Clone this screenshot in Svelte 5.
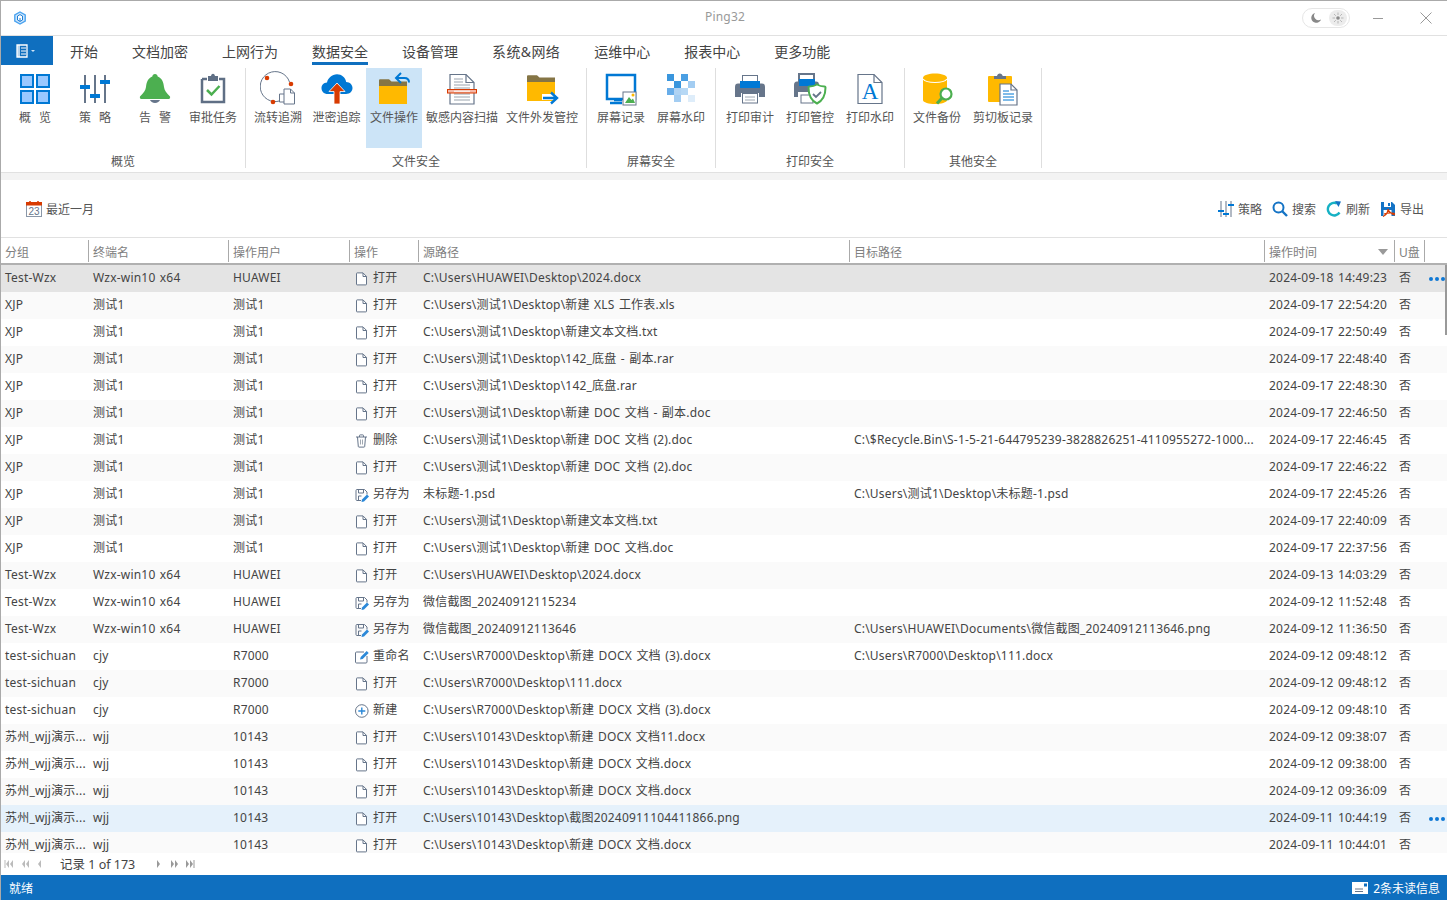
<script>
  const tabs = ['开始', '文档加密', '上网行为', '数据安全', '设备管理', '系统&网络', '运维中心', '报表中心', '更多功能'];

  const groups = [
    { label: '概览', width: 245, pad: 4, items: [
      { icon: 'overview', text: '概  览', w: 60 },
      { icon: 'policy', text: '策  略', w: 60 },
      { icon: 'bell', text: '告  警', w: 60 },
      { icon: 'approve', text: '审批任务', w: 56 },
    ] },
    { label: '文件安全', width: 341, pad: 3, items: [
      { icon: 'flow', text: '流转追溯', w: 58 },
      { icon: 'leak', text: '泄密追踪', w: 59 },
      { icon: 'fileop', text: '文件操作', w: 56, active: true },
      { icon: 'scan', text: '敏感内容扫描', w: 80 },
      { icon: 'outgoing', text: '文件外发管控', w: 80 },
    ] },
    { label: '屏幕安全', width: 129, pad: 4, items: [
      { icon: 'screen', text: '屏幕记录', w: 60 },
      { icon: 'mark', text: '屏幕水印', w: 60 },
    ] },
    { label: '打印安全', width: 189, pad: 4, items: [
      { icon: 'print', text: '打印审计', w: 60 },
      { icon: 'printctl', text: '打印管控', w: 60 },
      { icon: 'printmark', text: '打印水印', w: 60 },
    ] },
    { label: '其他安全', width: 137, pad: 4, items: [
      { icon: 'backup', text: '文件备份', w: 56 },
      { icon: 'clip', text: '剪切板记录', w: 76 },
    ] },
  ];

  const columns = ['分组', '终端名', '操作用户', '操作', '源路径', '目标路径', '操作时间', 'U盘'];

  // group|terminal|user|op|source|target|time  ("/" stands for the path separator)
  const raw = `Test-Wzx|Wzx-win10 x64|HUAWEI|打开|C:/Users/HUAWEI/Desktop/2024.docx||2024-09-18 14:49:23
XJP|测试1|测试1|打开|C:/Users/测试1/Desktop/新建 XLS 工作表.xls||2024-09-17 22:54:20
XJP|测试1|测试1|打开|C:/Users/测试1/Desktop/新建文本文档.txt||2024-09-17 22:50:49
XJP|测试1|测试1|打开|C:/Users/测试1/Desktop/142_底盘 - 副本.rar||2024-09-17 22:48:40
XJP|测试1|测试1|打开|C:/Users/测试1/Desktop/142_底盘.rar||2024-09-17 22:48:30
XJP|测试1|测试1|打开|C:/Users/测试1/Desktop/新建 DOC 文档 - 副本.doc||2024-09-17 22:46:50
XJP|测试1|测试1|删除|C:/Users/测试1/Desktop/新建 DOC 文档 (2).doc|C:/$Recycle.Bin/S-1-5-21-644795239-3828826251-4110955272-1000...|2024-09-17 22:46:45
XJP|测试1|测试1|打开|C:/Users/测试1/Desktop/新建 DOC 文档 (2).doc||2024-09-17 22:46:22
XJP|测试1|测试1|另存为|未标题-1.psd|C:/Users/测试1/Desktop/未标题-1.psd|2024-09-17 22:45:26
XJP|测试1|测试1|打开|C:/Users/测试1/Desktop/新建文本文档.txt||2024-09-17 22:40:09
XJP|测试1|测试1|打开|C:/Users/测试1/Desktop/新建 DOC 文档.doc||2024-09-17 22:37:56
Test-Wzx|Wzx-win10 x64|HUAWEI|打开|C:/Users/HUAWEI/Desktop/2024.docx||2024-09-13 14:03:29
Test-Wzx|Wzx-win10 x64|HUAWEI|另存为|微信截图_20240912115234||2024-09-12 11:52:48
Test-Wzx|Wzx-win10 x64|HUAWEI|另存为|微信截图_20240912113646|C:/Users/HUAWEI/Documents/微信截图_20240912113646.png|2024-09-12 11:36:50
test-sichuan|cjy|R7000|重命名|C:/Users/R7000/Desktop/新建 DOCX 文档 (3).docx|C:/Users/R7000/Desktop/111.docx|2024-09-12 09:48:12
test-sichuan|cjy|R7000|打开|C:/Users/R7000/Desktop/111.docx||2024-09-12 09:48:12
test-sichuan|cjy|R7000|新建|C:/Users/R7000/Desktop/新建 DOCX 文档 (3).docx||2024-09-12 09:48:10
苏州_wjj演示...|wjj|10143|打开|C:/Users/10143/Desktop/新建 DOCX 文档11.docx||2024-09-12 09:38:07
苏州_wjj演示...|wjj|10143|打开|C:/Users/10143/Desktop/新建 DOCX 文档.docx||2024-09-12 09:38:00
苏州_wjj演示...|wjj|10143|打开|C:/Users/10143/Desktop/新建 DOCX 文档.docx||2024-09-12 09:36:09
苏州_wjj演示...|wjj|10143|打开|C:/Users/10143/Desktop/截图20240911104411866.png||2024-09-11 10:44:19
苏州_wjj演示...|wjj|10143|打开|C:/Users/10143/Desktop/新建 DOCX 文档.docx||2024-09-11 10:44:01`;

  const rows = raw.split('\n').map((line) => {
    const [group, term, user, op, src, dst, time] = line.split('|');
    return { group, term, user, op, src: src.replaceAll('/', '\\'), dst: dst.replaceAll('/', '\\'), time };
  });

  const opIcons = { 打开: 'open', 删除: 'del', 另存为: 'saveas', 重命名: 'rename', 新建: 'create' };
</script>

{#snippet ribbonIcon(name)}
  <svg class="ricon" viewBox="0 0 36 36" width="36" height="36">
    {#if name === 'overview'}
      <g fill="#99c8ff" stroke="#0078d4" stroke-width="2">
        <rect x="4" y="5" width="12" height="12" /><rect x="20" y="5" width="12" height="12" />
        <rect x="4" y="21" width="12" height="12" /><rect x="20" y="21" width="12" height="12" />
      </g>
    {:else if name === 'policy'}
      <path d="M8 5v28M18 5v28M28 5v28" stroke="#66758a" stroke-width="2" fill="none" />
      <path d="M3 15h10v4H3zM13 24h10v4H13zM23 10h10v4H23z" fill="#0078d4" />
    {:else if name === 'bell'}
      <path d="M18 4c1.600 0 2.500 1 2.700 2.400C25 8 26.500 12 27 17c.4 3.500 2.500 6 6 9.500 .4.800 0 2-.8 2.500H3.800C3 28.500 2.600 27.300 3 26.500 6.500 23 8.600 20.500 9 17c.5-5 2-9 6.300-10.600C15.500 5 16.400 4 18 4z" fill="#4caf50" />
      <path d="M13 30h10c-.5 1.500-2.500 3-5 3s-4.500-1.500-5-3z" fill="#66758a" />
    {:else if name === 'approve'}
      <path d="M7 9h5M24 9h5V32H7V9" fill="#fff" stroke="#5f6f85" stroke-width="2.500" />
      <path d="M13 6h3c.4-1.500 1-2.200 2-2.200s1.600.7 2 2.200h3v5H13z" fill="#5f6f85" />
      <path d="M12 20l4.500 4.500L24.500 16" fill="none" stroke="#4caf50" stroke-width="2.500" />
    {:else if name === 'flow'}
      <path d="M27 28.500A15 15 0 1 1 31 13" transform="translate(-1.500 -1)" fill="none" stroke="#66758a" stroke-width="1" />
      <circle cx="7" cy="8" r="2.300" fill="#d83b01" /><circle cx="31" cy="14" r="2.300" fill="#d83b01" /><circle cx="13" cy="32" r="2.300" fill="#d83b01" />
      <path d="M19.500 24h4.500v-5h6.500l4 4v11H24v-2h-4.500z" fill="#fff" stroke="#66758a" stroke-width="1" />
      <path d="M24 24v8M30.500 19v4h4" fill="none" stroke="#66758a" stroke-width="1" />
    {:else if name === 'leak'}
      <path d="M9 24c-4.500 0-6.500-3-6.500-5.800 0-3 2.200-5.400 5.500-5.600C9 8 13 4.300 18 4.300c4.700 0 8.300 3.200 9.200 7.700 3.700.1 6.300 2.800 6.300 6 0 3.100-2.400 6-6.500 6z" fill="#0078d4" />
      <path d="M18 13l8 8.500h-5V34h-6V21.500h-5z" fill="#d83b01" stroke="#fff" stroke-width=".8" />
    {:else if name === 'fileop'}
      <path d="M3 17v-6.500c0-.8.500-1.300 1.300-1.300h8.700l2.500 2.200H31V17z" fill="#857545" />
      <rect x="3" y="16" width="28" height="18" fill="#ffb900" />
      <path d="M21 8h7.500c3 0 4.500 1.500 4.500 4.500" fill="none" stroke="#0078d4" stroke-width="2" />
      <path d="M25 3l-5 5 5 5" fill="none" stroke="#0078d4" stroke-width="2" />
    {:else if name === 'scan'}
      <path d="M6 4.500h16l8 8V34H6z" fill="#fff" stroke="#66758a" stroke-width="1.200" />
      <path d="M22 4.500v8h8" fill="none" stroke="#66758a" stroke-width="1.200" />
      <path d="M10 9h9M10 12h9M10 15h16M10 18h16M10 24h16M10 27h16M10 30h16" stroke="#9aa3ae" stroke-width="1" />
      <rect x="3.500" y="19.500" width="29" height="3.500" fill="#f5b8a8" stroke="#d83b01" stroke-width="1" />
      <path d="M10 21.200h16" stroke="#fff" stroke-width="1" />
    {:else if name === 'outgoing'}
      <path d="M3 12V6.500c0-.8.500-1.300 1.300-1.300h8.700l2.500 2.200H31V12z" fill="#857545" />
      <rect x="3" y="12" width="28" height="19" fill="#ffb900" />
      <path d="M18 27h15" stroke="#fff" stroke-width="6" />
      <path d="M19 28h13M27 22.500l6 5.500-6 5.500" fill="none" stroke="#0078d4" stroke-width="2.400" />
    {:else if name === 'screen'}
      <path d="M4 5h28v24H4z" fill="#fff" stroke="#0078d4" stroke-width="2.500" />
      <path d="M11 30h8M7 33h12" stroke="#0078d4" stroke-width="2.500" />
      <rect x="20" y="22" width="13" height="13" fill="#fff" stroke="#66758a" />
      <path d="M22 33l4-6 2.500 3 1.500-1.500 2 4.500z" fill="#4caf50" />
      <circle cx="30" cy="25" r="1.500" fill="#ffb900" />
    {:else if name === 'mark'}
      <rect x="4" y="4" width="7" height="7" fill="#3a96dd" /><rect x="18" y="4" width="7" height="7" fill="#4a9fe3" />
      <rect x="11" y="11" width="7" height="7" fill="#3a96dd" /><rect x="25" y="11" width="7" height="7" fill="#a3cdf2" />
      <rect x="4" y="18" width="7" height="7" fill="#68ade9" /><rect x="18" y="18" width="7" height="7" fill="#b6d8f5" />
      <rect x="11" y="25" width="7" height="7" fill="#a3cdf2" /><rect x="25" y="25" width="7" height="7" fill="#deedfa" />
      <rect x="11" y="18" width="7" height="7" fill="#8fc1ee" opacity=".7" />
    {:else if name === 'print'}
      <rect x="10.500" y="5.500" width="15" height="8" fill="#fff" stroke="#66758a" />
      <path d="M3 27V17c0-2.500 1-3.500 3-3.500h24c2 0 3 1 3 3.500v10h-6v-4H9v4z" fill="#66758a" />
      <path d="M8 11h20v7H8z" fill="#0078d4" />
      <rect x="10.500" y="23.500" width="15" height="9.500" fill="#fff" stroke="#66758a" />
      <path d="M13 27h10M13 30h10" stroke="#a0a8b2" />
    {:else if name === 'printctl'}
      <rect x="7" y="4" width="15" height="7" fill="#fff" stroke="#66758a" stroke-width="2" />
      <path d="M2 27V15c0-2 1-3.500 3-3.500h19c2 0 3 1 3 3.500v12h-4v-5H6v5z" fill="#66758a" />
      <path d="M7 9h16v7H7z" fill="#0078d4" />
      <rect x="9" y="25" width="12" height="8" fill="#fff" stroke="#66758a" />
      <path d="M25 14.500c2.500 1.500 4.500 2 7.500 2 .5 0 1 .4 1 1 0 7.500-2.500 13-8.500 16-6-3-8.500-8.500-8.500-16 0-.6.500-1 1-1 3 0 5-.5 7.500-2z" fill="#fff" stroke="#4caf50" stroke-width="2" />
      <path d="M21 24l3 3 5-5" fill="none" stroke="#66758a" stroke-width="1.800" />
    {:else if name === 'printmark'}
      <path d="M6 4.500h16l8 8V33.500H6z" fill="#fff" stroke="#66758a" stroke-width="1.200" />
      <path d="M22 4.500v8h8" fill="none" stroke="#66758a" stroke-width="1.200" />
      <text x="18" y="29" text-anchor="middle" font-family="Liberation Serif, serif" font-size="23" fill="#0078d4">A</text>
    {:else if name === 'backup'}
      <path d="M4 8c0-3 6-4.500 12-4.500S28 5 28 8v22c0 2.500-6 4-12 4S4 32.500 4 30z" fill="#ffb900" />
      <path d="M4 9c2 2.500 7 3.500 12 3.500S26 11.500 28 9" fill="none" stroke="#fff" stroke-width="1.200" />
      <circle cx="27" cy="24" r="5.500" fill="#fff" stroke="#4caf50" stroke-width="2.200" />
      <path d="M23 28l-5 5.500" stroke="#4caf50" stroke-width="3" />
    {:else if name === 'clip'}
      <rect x="3" y="6" width="24" height="26" rx="1" fill="#ffb900" />
      <path d="M9 9V6h3c.4-1.500 1.200-2.500 2.800-2.500S17.300 4.500 17.700 6H21v3z" fill="#66758a" />
      <path d="M15 14h11l6 6v15H15z" fill="#fff" stroke="#66758a" stroke-width="1.200" />
      <path d="M26 14v6h6" fill="none" stroke="#66758a" stroke-width="1.200" />
      <path d="M18 21h6M18 24h11M18 27h11M18 30h11" stroke="#0078d4" stroke-width="1.200" />
    {/if}
  </svg>
{/snippet}

{#snippet opIcon(name)}
  <svg class="opicon" viewBox="0 0 14 14" width="14" height="14">
    {#if name === 'open'}
      <path d="M1.500 1.500c0-.4.200-.6.600-.6H8l3.500 3.500v7.900c0 .4-.2.600-.6.600H2.100c-.4 0-.6-.2-.6-.6z" fill="#fff" stroke="#66758a" />
      <path d="M8 1v3.500h3.500" fill="none" stroke="#66758a" />
    {:else if name === 'del'}
      <path d="M1 3h11M4.500 3V1.500c0-.4.200-.6.600-.6h2.800c.4 0 .6.200.6.600V3M2.500 3l.8 9.500c0 .4.300.6.700.6h5c.4 0 .7-.2.700-.6l.8-9.500" fill="none" stroke="#66758a" />
      <path d="M5.500 5.500v5M7.500 5.500v5" stroke="#a0a8b2" />
    {:else if name === 'saveas'}
      <path d="M6 12.500H2c-.6 0-1-.4-1-1V2.500c0-.6.400-1 1-1h7.500L12 4v2.500" fill="none" stroke="#66758a" />
      <path d="M3.500 1.500v3.500h5V1.500M3.500 12.500V8h3" fill="none" stroke="#66758a" />
      <path d="M6.500 14l.5-2.500 5-5 2 2-5 5z" fill="#2b88d8" />
    {:else if name === 'rename'}
      <path d="M9 2H1.500c-.6 0-1 .4-1 1v9c0 .6.400 1 1 1h9.500c.6 0 1-.4 1-1V6" fill="none" stroke="#66758a" />
      <path d="M5 9.500l.7-2.500L11.700 1l2 2-6 6z" fill="#2b88d8" />
    {:else if name === 'create'}
      <circle cx="6.800" cy="7" r="6.300" fill="#fff" stroke="#66758a" />
      <path d="M3.300 7h7M6.800 3.500v7" stroke="#2b88d8" stroke-width="1.400" />
    {/if}
  </svg>
{/snippet}

<div class="app">
  <header class="titlebar">
    <svg class="logo" viewBox="0 0 14 14" width="14" height="14">
      <path d="M7 1l5.200 3v6L7 13l-5.200-3V4z" fill="#cfe6fb" stroke="#4aa3f0" stroke-width="1.400" />
      <path d="M4.500 5L7 3.600 9.500 5v4L7 10.400 4.500 9z" fill="#fff" stroke="#1f7fd6" stroke-width="1" />
      <path d="M7 7v3.400" stroke="#1f7fd6" />
    </svg>
    <span class="title">Ping32</span>
    <div class="winctl">
      <div class="theme">
        <svg viewBox="0 0 12 12" width="12" height="12"><path d="M5 1a5 5 0 1 0 6 6.500A4.500 4.500 0 0 1 5 1z" fill="#888" /></svg>
        <span class="sun">
          <svg viewBox="0 0 12 12" width="12" height="12">
            <circle cx="6" cy="6" r="1.800" fill="#8a8a8a" />
            <path d="M6 .5v2.500M6 9v2.500M.5 6H3M9 6h2.500M2 2l1.800 1.800M8.200 8.200L10 10M2 10l1.800-1.800M8.200 3.800L10 2" stroke="#aaa" stroke-width=".8" />
          </svg>
        </span>
      </div>
      <svg class="minbtn" viewBox="0 0 12 12" width="12" height="12"><path d="M1 6.500h10" stroke="#999" /></svg>
      <svg class="closebtn" viewBox="0 0 12 12" width="12" height="12"><path d="M.5.500l11 11M11.500.500l-11 11" stroke="#999" /></svg>
    </div>
  </header>

  <nav class="tabs">
    <div class="appbtn">
      <svg viewBox="0 0 14 14" width="14" height="14">
        <path d="M2 1h10v12H2z" fill="none" stroke="#fff" stroke-width="1.300" />
        <path d="M2 1h3v12H2z" fill="#fff" opacity=".7" />
        <path d="M6 4h5M6 7h5M6 10h5" stroke="#fff" />
      </svg>
      <i class="caret"></i>
    </div>
    {#each tabs as tab}
      <span class="tab" class:current={tab === '数据安全'} class:amp={tab.includes('&')}>{tab}</span>
    {/each}
  </nav>

  <section class="ribbon">
    {#each groups as g}
      <div class="rgroup" style="width: {g.width}px">
        <div class="ritems" style="padding-left: {g.pad}px">
          {#each g.items as item}
            <div class="ritem" class:active={item.active} style="width: {item.w}px">
              {@render ribbonIcon(item.icon)}
              <span class="rlabel">{item.text}</span>
            </div>
          {/each}
        </div>
        <div class="glabel">{g.label}</div>
      </div>
    {/each}
  </section>

  <div class="band"></div>

  <div class="toolbar">
    <div class="tbtn">
      <svg viewBox="0 0 16 16" width="16" height="16">
        <rect x=".5" y="1.500" width="15" height="14" fill="#fff" stroke="#8a97a8" />
        <rect x="0" y="1" width="16" height="3.500" fill="#d83b01" />
        <path d="M4 0v2M12 0v2" stroke="#d83b01" stroke-width="1.500" />
        <text x="8" y="14" text-anchor="middle" font-size="10" font-family="Liberation Sans, sans-serif" fill="#66758a">23</text>
      </svg>
      最近一月
    </div>
    <div class="tactions">
      <div class="tbtn">
        <svg viewBox="0 0 16 16" width="16" height="16">
          <path d="M3 0v16M8 0v16M13 0v16" stroke="#66758a" />
          <path d="M0 9h6v2H0zM5 12h6v2H5zM10 3h6v2h-6z" fill="#0078d4" />
        </svg>
        策略
      </div>
      <div class="tbtn">
        <svg viewBox="0 0 16 16" width="16" height="16">
          <circle cx="6.500" cy="6.500" r="5" fill="none" stroke="#1473c5" stroke-width="2" />
          <path d="M10 10l5 5" stroke="#1473c5" stroke-width="2.400" />
        </svg>
        搜索
      </div>
      <div class="tbtn">
        <svg viewBox="0 0 16 16" width="16" height="16">
          <path d="M13.500 11.500A6.300 6.300 0 1 1 11 2.500" fill="none" stroke="#16b1c4" stroke-width="2.400" />
          <path d="M9 .0l6 .5-2.500 5.500z" fill="#1473c5" />
        </svg>
        刷新
      </div>
      <div class="tbtn">
        <svg viewBox="0 0 16 16" width="16" height="16">
          <path d="M1 1h11l3 3v11H1z" fill="#1473c5" />
          <rect x="4" y="1" width="7" height="5" fill="#fff" />
          <rect x="8" y="2" width="2" height="3" fill="#1473c5" />
          <rect x="3.500" y="9" width="8" height="6" fill="#fff" />
          <path d="M8 8c1 3 3 5 7 6M8 8c0 3-2 6-5 7.500M4 13c3-1 7-1.500 11-.5" fill="none" stroke="#d83b01" stroke-width="1.200" />
        </svg>
        导出
      </div>
    </div>
  </div>

  <div class="thead">
    {#each columns as col}
      <div class="th">
        {col}
        {#if col === '操作时间'}<i class="sort"></i>{/if}
      </div>
    {/each}
  </div>

  <div class="tbody">
    <div class="thumb"></div>
    {#each rows as row, i}
      <div class="tr" class:selected={i === 0} class:hovered={i === 20} class:alt={i % 2 === 1}>
        <div class="td">{row.group}</div>
        <div class="td">{row.term}</div>
        <div class="td">{row.user}</div>
        <div class="td op">{@render opIcon(opIcons[row.op])}{row.op}</div>
        <div class="td">{row.src}</div>
        <div class="td">{row.dst}</div>
        <div class="td">{row.time}</div>
        <div class="td">否</div>
        <div class="td dots">{#if i === 0 || i === 20}<b></b><b></b><b></b>{/if}</div>
      </div>
    {/each}
  </div>

  <div class="pager">
    <div class="pbtns left">
      <svg viewBox="0 0 10 8" width="10" height="8"><path d="M1 0v8" stroke="#bbb" /><path d="M5 0L2 4l3 4zM9 0L6 4l3 4z" fill="#bbb" /></svg>
      <svg viewBox="0 0 9 8" width="9" height="8"><path d="M4 0L1 4l3 4zM8 0L5 4l3 4z" fill="#bbb" /></svg>
      <svg viewBox="0 0 5 8" width="5" height="8"><path d="M4 0L1 4l3 4z" fill="#bbb" /></svg>
    </div>
    <span class="ptext">记录 1 of 173</span>
    <div class="pbtns right">
      <svg viewBox="0 0 5 8" width="5" height="8"><path d="M1 0l3 4-3 4z" fill="#999" /></svg>
      <svg viewBox="0 0 9 8" width="9" height="8"><path d="M1 0l3 4-3 4zM5 0l3 4-3 4z" fill="#999" /></svg>
      <svg class="plast" viewBox="0 0 10 8" width="10" height="8"><path d="M1 0l3 4-3 4zM5 0l3 4-3 4z" fill="#999" /><path d="M9 0v8" stroke="#999" /></svg>
    </div>
  </div>

  <footer class="status">
    <span>就绪</span>
    <span class="unread">
      <svg viewBox="0 0 16 12" width="16" height="12">
        <rect width="16" height="12" fill="#fff" />
        <path d="M3 7h8M3 9.500h8" stroke="#66758a" />
        <rect x="12" y="1.500" width="3" height="3" fill="#0f6fbf" />
      </svg>
      2条未读信息
    </span>
  </footer>
</div>

<style>
  :global(body) {
    margin: 0;
  }

  .app {
    width: 1447px;
    height: 900px;
    box-sizing: border-box;
    border-top: 1px solid #aaa;
    border-left: 1px solid #aaa;
    display: flex;
    flex-direction: column;
    overflow: hidden;
    background: #fff;
    color: #444;
    font-family: "Noto Sans", "Noto Sans CJK SC", sans-serif;
    font-size: 12px;
  }

  .titlebar {
    height: 34px;
    flex: none;
    display: flex;
    align-items: center;
    position: relative;
    border-bottom: 1px solid #e1e1e1;
  }

  .logo {
    margin-left: 12px;
  }

  .title {
    position: absolute;
    left: 704px;
    top: 7px;
    color: #999;
    letter-spacing: .2px;
  }

  .winctl {
    margin-left: auto;
    display: flex;
    align-items: center;
    padding-right: 15px;
  }

  .theme {
    width: 37px;
    height: 18px;
    border: 1px solid #e6e6e6;
    border-radius: 10px;
    display: flex;
    align-items: center;
    justify-content: space-between;
    padding: 0 2px 0 7px;
    box-sizing: content-box;
  }

  .sun {
    width: 18px;
    height: 16px;
    border-radius: 8px;
    background: #ececec;
    display: flex;
    align-items: center;
    justify-content: center;
  }

  .minbtn {
    margin-left: 22px;
  }

  .closebtn {
    margin-left: 36px;
  }

  .tabs {
    height: 29px;
    flex: none;
    display: flex;
    gap: 34px;
    align-items: stretch;
    font-size: 14px;
    color: #444;
  }

  .appbtn {
    width: 52px;
    margin-right: -17px;
    background: #0f6fbf;
    display: flex;
    align-items: center;
    justify-content: center;
    gap: 2px;
    padding-right: 4px;
    box-sizing: border-box;
  }

  .caret {
    border: 2px solid transparent;
    border-top-color: #cfe3f5;
    margin-top: 3px;
  }

  .tab {
    line-height: 31px;
    height: 29px;
    box-sizing: border-box;
  }

  .tab.amp {
    letter-spacing: .4px;
  }

  .tab.current {
    border-bottom: 3px solid #0f6fbf;
  }

  .ribbon {
    height: 107px;
    flex: none;
    display: flex;
    padding-top: 3px;
    box-sizing: border-box;
  }

  .rgroup {
    box-sizing: border-box;
    height: 100px;
    border-right: 1px solid #dedede;
    display: flex;
    flex-direction: column;
    flex: none;
  }

  .ritems {
    display: flex;
    height: 80px;
    flex: none;
  }

  .ritem {
    display: flex;
    flex-direction: column;
    align-items: center;
    padding-top: 2px;
    box-sizing: border-box;
    flex: none;
  }

  .ritem.active {
    background: #cce4f7;
  }

  .ricon {
    display: block;
    flex: none;
  }

  .rlabel {
    margin-top: 4px;
    line-height: 16px;
    white-space: pre;
    word-spacing: 1px;
    color: #555;
  }

  .glabel {
    text-align: center;
    line-height: 16px;
    margin-top: 6px;
    color: #555;
  }

  .band {
    height: 8px;
    flex: none;
    background: #f3f3f3;
    border-top: 1px solid #e1e1e1;
    box-sizing: border-box;
  }

  .toolbar {
    height: 57px;
    flex: none;
    display: flex;
    align-items: center;
    justify-content: space-between;
    padding: 0 23px 0 25px;
    box-sizing: border-box;
  }

  .tactions {
    display: flex;
    gap: 10px;
  }

  .tbtn {
    display: flex;
    align-items: center;
    gap: 4px;
    color: #555;
  }

  .thead,
  .tr {
    display: grid;
    grid-template-columns: 88px 140px 121px 69px 431px 415px 130px 30px 1fr;
  }

  .thead {
    height: 28px;
    flex: none;
    box-sizing: border-box;
    border-top: 1px solid #e1e1e1;
    border-bottom: 2px solid #b0b0b0;
    padding-top: 2px;
    color: #808080;
  }

  .th {
    height: 22px;
    line-height: 26px;
    padding-left: 4px;
    border-right: 1px solid #aaa;
    position: relative;
  }

  .sort {
    position: absolute;
    right: 6px;
    top: 9px;
    border: 5px solid transparent;
    border-top: 6px solid #999;
    border-bottom: 0;
  }

  .tbody {
    height: 588px;
    flex: none;
    overflow: hidden;
    position: relative;
    letter-spacing: .2px;
    word-spacing: 1px;
  }

  .thumb {
    position: absolute;
    right: 0;
    top: 0;
    width: 2px;
    height: 70px;
    background: #999;
  }

  .tr {
    height: 27px;
    align-items: start;
  }

  .tr.alt {
    background: #fafafa;
  }

  .tr.selected {
    background: #e4e4e4;
  }

  .tr.hovered {
    background: #e5f1fb;
  }

  .td {
    padding-left: 4px;
    white-space: nowrap;
    overflow: hidden;
    line-height: 25px;
  }

  .op {
    display: flex;
    align-items: center;
    padding-left: 5px;
    gap: 4px;
    height: 25px;
    overflow: visible;
  }

  .opicon {
    flex: none;
    margin-top: 2px;
  }

  .dots {
    display: flex;
    align-items: center;
    gap: 2px;
    height: 27px;
    overflow: visible;
  }

  .dots b {
    width: 4px;
    height: 4px;
    border-radius: 50%;
    background: #0f78d4;
    flex: none;
  }

  .pager {
    height: 22px;
    flex: none;
    display: flex;
    align-items: center;
    padding: 0 0 1px 3px;
    box-sizing: border-box;
  }

  .pbtns {
    display: flex;
    align-items: center;
  }

  .pbtns.left {
    gap: 7px;
    width: 56px;
  }

  .pbtns.right {
    gap: 9px;
    margin-left: 19px;
  }

  .plast {
    margin-left: -3px;
  }

  .ptext {
    width: 77px;
    white-space: nowrap;
    font-size: 12.5px;
  }

  .status {
    height: 25px;
    flex: none;
    background: #0f6fbf;
    color: #fff;
    display: flex;
    align-items: center;
    justify-content: space-between;
    padding: 0 7px 0 8px;
  }

  .unread {
    display: flex;
    align-items: center;
    gap: 5px;
  }
</style>
